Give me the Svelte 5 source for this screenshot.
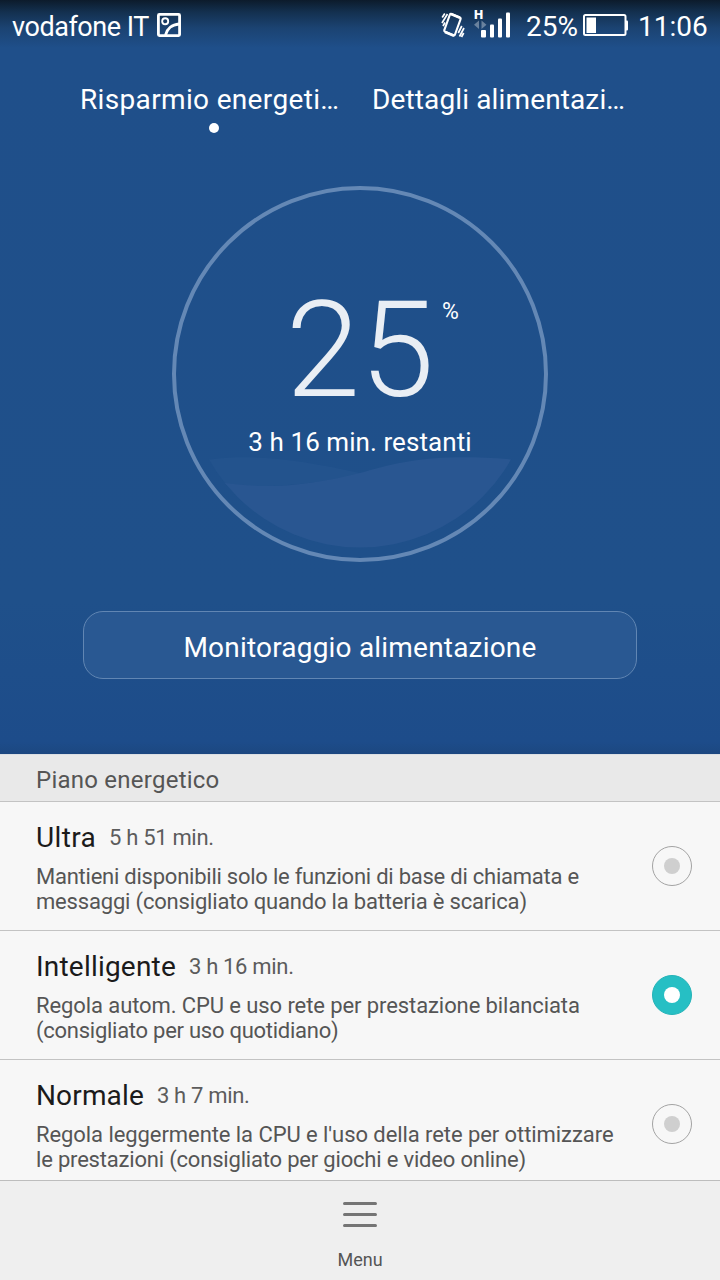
<script>
  let selected = $state("Intelligente");

  const tabs = [
    { label: "Risparmio energeti…", active: true },
    { label: "Dettagli alimentazi…", active: false },
  ];

  // spacing is the letter-spacing of each line, in px
  const plans = [
    {
      name: "Ultra",
      spacing: 0.35,
      time: "5 h 51 min.",
      lines: [
        { text: "Mantieni disponibili solo le funzioni di base di chiamata e", spacing: -0.24 },
        { text: "messaggi (consigliato quando la batteria è scarica)", spacing: -0.18 },
      ],
    },
    {
      name: "Intelligente",
      spacing: 0.2,
      time: "3 h 16 min.",
      lines: [
        { text: "Regola autom. CPU e uso rete per prestazione bilanciata", spacing: -0.09 },
        { text: "(consigliato per uso quotidiano)", spacing: -0.26 },
      ],
    },
    {
      name: "Normale",
      spacing: 0.15,
      time: "3 h 7 min.",
      lines: [
        { text: "Regola leggermente la CPU e l'uso della rete per ottimizzare", spacing: -0.07 },
        { text: "le prestazioni (consigliato per giochi e video online)", spacing: -0.19 },
      ],
    },
  ];
</script>

<div class="screen">
  <section class="hero">
    <header class="status">
      <span class="carrier">vodafone IT</span>
      <svg class="picture" width="24" height="24" viewBox="0 0 24 24" fill="none" stroke="#fff">
        <rect x="1.4" y="1.4" width="21.200" height="21.200" rx="1" stroke-width="2.800" />
        <circle cx="8.200" cy="8.300" r="3" stroke-width="1.900" />
        <path d="M8.500 22C10 16 15 11.500 22 11" stroke-width="2.800" />
      </svg>
      <svg class="vibrate" width="24" height="28" viewBox="0 0 24 28" fill="none" stroke="#fff">
        <path d="M10.300 3L18.700 6.500Q20 7 19.500 8.300L14 23.500Q13.500 24.800 12.300 24.300L4 20.700Q2.800 20.200 3.300 19L8.800 3.800Q9.200 2.600 10.300 3Z" stroke-width="2.100" />
        <path d="M4 21L13 24.700M10 3L19 6.700" stroke-width="2.600" />
        <path d="M1.200 6.500L3.800 2.500M1 12L6.500 3M2 15L4 11.500M23 17L18.500 25.500M22.700 22L20.500 26M20.800 15L17.300 22" stroke-width="1.700" />
      </svg>
      <svg class="signal" width="38" height="32" viewBox="0 0 38 32" fill="#fff">
        <text x="0" y="10.500" class="network">H</text>
        <path d="M5 12.500V21L0 16.800ZM7.500 12.500V21L12.500 16.800Z" opacity=".35" />
        <rect x="7" y="22" width="5" height="7.500" rx="1" />
        <rect x="16" y="16.500" width="4" height="13" rx="1" />
        <rect x="24" y="10.500" width="4" height="19" rx="1" />
        <rect x="32" y="4.500" width="4" height="25" rx="1" />
      </svg>
      <span class="percent">25%</span>
      <svg class="battery" width="46" height="24" viewBox="0 0 46 24" fill="#fff">
        <rect x="1" y="2" width="41.500" height="20" rx="1.500" fill="none" stroke="#fff" stroke-width="2" />
        <rect x="3.500" y="4.500" width="9.500" height="15.500" />
        <rect x="42.500" y="7.500" width="2.500" height="10" rx="1" />
      </svg>
      <span class="clock">11:06</span>
    </header>

    <nav class="tabs">
      {#each tabs as tab}
        <div class="tab">
          <span class="tab-label" class:wide={tab.active}>{tab.label}</span>
          {#if tab.active}<i class="dot"></i>{/if}
        </div>
      {/each}
    </nav>

    <div class="gauge">
      <svg class="ring" width="376" height="376" viewBox="0 0 376 376">
        <defs>
          <clipPath id="inner"><circle cx="188" cy="188" r="173.500" /></clipPath>
        </defs>
        <g clip-path="url(#inner)">
          <path class="wave back" d="M0 282C50 266 105 268 192 288C150 296 100 306 20 296V376H0Z" />
          <path class="wave" d="M0 284C60 304 115 306 192 286C240 272 280 266 376 277V376H0Z" />
        </g>
        <circle cx="188" cy="188" r="186" fill="none" stroke="#6488b5" stroke-width="4" />
      </svg>
      <div class="level">25<sup>%</sup></div>
      <div class="remaining">3 h 16 min. restanti</div>
    </div>

    <button class="monitor"><span>Monitoraggio alimentazione</span></button>
  </section>

  <h2>Piano energetico</h2>

  <ul>
    {#each plans as plan}
      <li>
        <button class="plan" onclick={() => (selected = plan.name)}>
          <span class="text">
            <span class="title">
              <b style="letter-spacing: {plan.spacing}px">{plan.name}</b>
              <small>{plan.time}</small>
            </span>
            {#each plan.lines as line}
              <span class="line" style="letter-spacing: {line.spacing}px">{line.text}</span>
            {/each}
          </span>
          <i class="radio" class:on={selected === plan.name}></i>
        </button>
      </li>
    {/each}
  </ul>

  <footer>
    <svg width="34" height="26" viewBox="0 0 34 26" fill="#757575">
      <rect y="0" width="34" height="3" rx="1.500" />
      <rect y="11" width="34" height="3" rx="1.500" />
      <rect y="22" width="34" height="3" rx="1.500" />
    </svg>
    <span>Menu</span>
  </footer>
</div>

<style>
  :global(body) {
    margin: 0;
  }
  .screen {
    display: flex;
    flex-direction: column;
    width: 720px;
    height: 1280px;
    overflow: hidden;
    background: #f7f7f7;
    font-family: Roboto, "Noto Sans", sans-serif;
  }
  .hero {
    display: flex;
    flex-direction: column;
    align-items: center;
    flex: none;
    height: 754px;
    color: #fff;
    background: linear-gradient(#0c1b2b 0, #13304f 12px, #1b4372 28px, #1f4f8a 48px, #1f508a 600px, #1d4c8a 742px, #1c4780 754px);
  }
  .status {
    display: flex;
    align-items: center;
    box-sizing: border-box;
    width: 100%;
    height: 52px;
    padding: 0 12px;
    font-size: 28px;
    white-space: nowrap;
  }
  .carrier {
    width: 145px;
    padding-top: 2px;
    font-size: 27px;
    letter-spacing: -0.45px;
  }
  .picture {
    margin-bottom: 2px;
  }
  .vibrate {
    margin: 0 9px 2px 260px;
  }
  .signal {
    margin-bottom: 4px;
  }
  .network {
    font-size: 13px;
    font-weight: 900;
  }
  .percent {
    width: 57px;
    margin-left: 14px;
  }
  .battery {
    margin: 0 9px 2px 0;
  }
  .tabs {
    display: flex;
    gap: 24px;
    width: 560px;
    height: 134px;
    font-size: 28px;
  }
  .tab {
    display: flex;
    flex-direction: column;
    align-items: center;
    width: 268px;
    padding-top: 31px;
  }
  .tab-label {
    align-self: flex-start;
    line-height: 33px;
    letter-spacing: 0.13px;
    white-space: nowrap;
  }
  .tab-label.wide {
    letter-spacing: 0.34px;
  }
  .dot {
    width: 10px;
    height: 10px;
    margin-top: 7px;
    border-radius: 50%;
    background: #fff;
  }
  .gauge {
    position: relative;
    flex: none;
    width: 376px;
    height: 376px;
    text-align: center;
  }
  .ring {
    position: absolute;
    inset: 0;
  }
  .wave {
    fill: #295691;
  }
  .wave.back {
    fill: #23538d;
  }
  .level {
    position: relative;
    padding-top: 86px;
    font-size: 134px;
    font-weight: 300;
    line-height: 158px;
    color: #e9eef4;
  }
  sup {
    position: absolute;
    top: 112px;
    left: 270px;
    font-size: 23px;
    font-weight: 400;
    line-height: 28px;
    color: #fff;
  }
  .remaining {
    position: relative;
    margin-top: -3px;
    font-size: 26px;
    line-height: 30px;
    letter-spacing: 0.07px;
  }
  .monitor {
    box-sizing: border-box;
    width: 554px;
    height: 68px;
    margin-top: 49px;
    padding: 4px 0 0;
    border: 1px solid #6186b3;
    border-radius: 20px;
    background: #295892;
    color: #fff;
    font: 28px Roboto, sans-serif;
    letter-spacing: 0.2px;
  }
  h2 {
    box-sizing: border-box;
    flex: none;
    height: 48px;
    margin: 0;
    padding-left: 36px;
    border-top: 1px solid #dcdfe3;
    border-bottom: 1px solid #c3c3c3;
    background: #e9e9e9;
    color: #555;
    font-size: 24px;
    font-weight: 400;
    line-height: 51px;
    letter-spacing: 0.24px;
  }
  ul {
    flex: none;
    height: 378px;
    margin: 0;
    padding: 0;
    overflow: hidden;
    list-style: none;
  }
  .plan {
    display: flex;
    justify-content: space-between;
    box-sizing: border-box;
    width: 100%;
    height: 129px;
    padding: 15px 28px 0 36px;
    border: 0;
    border-bottom: 1px solid #c3c3c3;
    background: none;
    text-align: left;
    font-family: inherit;
  }
  .text {
    display: flex;
    flex-direction: column;
    white-space: nowrap;
  }
  .title {
    display: flex;
    align-items: center;
    gap: 13px;
    height: 42px;
    margin-bottom: 5px;
    line-height: 42px;
  }
  b {
    color: #1b1b1b;
    font-size: 28px;
    font-weight: 400;
  }
  small {
    color: #5c5c5c;
    font-size: 22px;
    letter-spacing: -0.32px;
  }
  .line {
    color: #555;
    font-size: 22px;
    line-height: 25px;
  }
  .radio {
    display: grid;
    place-items: center;
    box-sizing: border-box;
    width: 40px;
    height: 40px;
    margin-top: 29px;
    border: 1px solid #a3a3a3;
    border-radius: 50%;
  }
  .radio::after {
    content: "";
    width: 16px;
    height: 16px;
    border-radius: 50%;
    background: #cfcfcf;
  }
  .radio.on {
    border-color: #25b3b8;
    background: #26bfc4;
  }
  .radio.on::after {
    background: #fff;
  }
  footer {
    display: flex;
    flex-direction: column;
    align-items: center;
    box-sizing: border-box;
    height: 100px;
    padding-top: 21px;
    border-top: 1px solid #bdbdbd;
    background: #efefef;
    color: #555;
    font-size: 18px;
  }
  footer span {
    margin-top: 21px;
  }
</style>
